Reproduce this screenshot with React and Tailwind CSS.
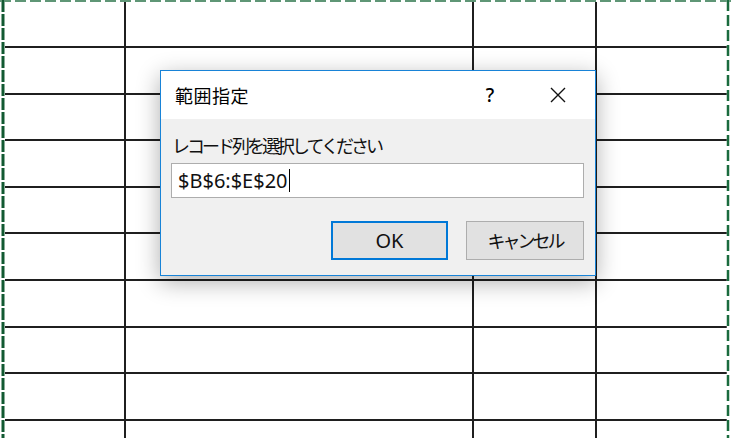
import React from 'react';

// row heights so the sheet lines land on the same pixels as the reference
const rowHeights = ['h-[48px]', 'h-[47px]', 'h-[46px]', 'h-[47px]', 'h-[46px]', 'h-[47px]', 'h-[47px]', 'h-[46px]', 'h-[47px]', 'h-[47px]'];

const jp = { fontFamily: '"Noto Sans CJK JP", "Noto Sans", sans-serif' };
const latin = { fontFamily: '"Noto Sans", "Noto Sans CJK JP", sans-serif' };

function SheetRow({ h }) {
  return (
    <div className={`flex shrink-0 border-b-2 border-[#1f1f1f] ${h}`}>
      <div className="w-[121px] shrink-0 border-r-2 border-[#1f1f1f]" />
      <div className="w-[348px] shrink-0 border-r-2 border-[#1f1f1f]" />
      <div className="w-[123px] shrink-0 border-r-2 border-[#1f1f1f]" />
      <div className="flex-1" />
    </div>
  );
}

function CopyMarquee() {
  return (
    <svg className="absolute inset-0 pointer-events-none" width="733" height="438" viewBox="0 0 733 438">
      <line x1="0" y1="1" x2="733" y2="1" stroke="#ffffff" strokeWidth="2" />
      <line x1="0" y1="1" x2="733" y2="1" stroke="#5f9676" strokeWidth="2" strokeDasharray="11 4" />
      <line x1="3" y1="0" x2="3" y2="438" stroke="#ffffff" strokeWidth="3" />
      <line x1="3" y1="0" x2="3" y2="438" stroke="#125a32" strokeWidth="3" strokeDasharray="12 2" />
      <line x1="728" y1="0" x2="728" y2="438" stroke="#ffffff" strokeWidth="2.5" />
      <line x1="728" y1="0" x2="728" y2="438" stroke="#1a6b3e" strokeWidth="2.5" strokeDasharray="11 4" />
    </svg>
  );
}

function RangeDialog() {
  return (
    <div className="absolute left-[160px] top-[70px] w-[436px] h-[206px] flex flex-col border border-[#1883d7] bg-[#f0f0f0] shadow-[0_6px_22px_rgba(0,0,0,0.32)]">
      {/* title bar */}
      <div className="h-[48px] shrink-0 flex items-center bg-white pl-[14px] text-black">
        <span className="flex-1 text-[18px] tracking-[0.5px]" style={jp}>範囲指定</span>
        <span className="text-[19px] font-medium w-[20px] text-center mr-[50px]" style={latin}>?</span>
        <svg className="mr-[29px]" width="16" height="16" viewBox="0 0 16 16">
          <path d="M1 1 L15 15 M15 1 L1 15" stroke="#111" strokeWidth="1.4" fill="none" />
        </svg>
      </div>

      {/* body */}
      <div className="flex-1 flex flex-col px-[10px] pt-[16px]">
        <div className="text-[18px] leading-[20px] tracking-[-3px] text-[#111] pl-[1px]" style={jp}>
          レコード列を選択してください
        </div>
        <div className="mt-[8px] h-[35px] w-[413px] flex items-center border border-[#adadad] bg-white pl-[6px]">
          <span className="text-[20px] text-[#111]" style={latin}>$B$6:$E$20</span>
          <span className="ml-[1px] w-px h-[23px] bg-black" />
        </div>
        <div className="mt-[23px] flex justify-end gap-[18px] pr-[1px]">
          <button className="w-[117px] h-[39px] flex items-center justify-center border-2 border-[#0078d7] bg-[#e1e1e1] text-[20px] text-[#111]" style={latin}>
            OK
          </button>
          <button className="w-[118px] h-[39px] flex items-center justify-center border border-[#adadad] bg-[#e1e1e1] text-[18px] tracking-[-3px] text-[#111]" style={jp}>
            キャンセル
          </button>
        </div>
      </div>
    </div>
  );
}

export default function App() {
  return (
    <div className="relative w-[733px] h-[438px] overflow-hidden bg-white">
      <div className="ml-[5px] w-[722px] flex flex-col">
        {rowHeights.map((h, i) => (
          <SheetRow key={i} h={h} />
        ))}
      </div>
      <CopyMarquee />
      <RangeDialog />
    </div>
  );
}
